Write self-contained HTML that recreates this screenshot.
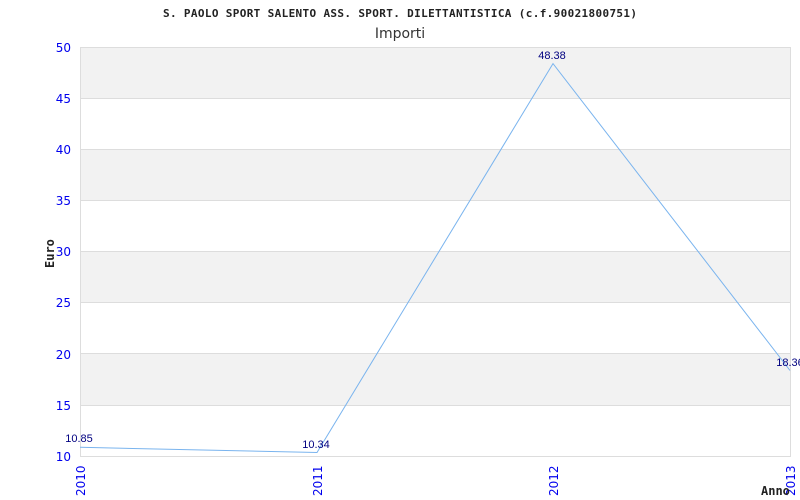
<!DOCTYPE html>
<html><head><style>body{margin:0;background:#fff}svg{display:block}</style></head><body>
<svg width="800" height="500" xmlns="http://www.w3.org/2000/svg" font-family="DejaVu Sans Mono, monospace">
<rect width="800" height="500" fill="#fff"/>
<text x="400" y="17" text-anchor="middle" font-size="11" font-weight="bold" fill="#222" textLength="474" lengthAdjust="spacing">S. PAOLO SPORT SALENTO ASS. SPORT. DILETTANTISTICA (c.f.90021800751)</text>
<text x="400" y="38" text-anchor="middle" font-size="14" fill="#333" font-family="DejaVu Sans, sans-serif">Importi</text>
<g fill="#f2f2f2">
<rect x="80" y="47" width="710" height="51"/>
<rect x="80" y="149" width="710" height="51"/>
<rect x="80" y="251" width="710" height="51"/>
<rect x="80" y="354" width="710" height="51"/>
</g>
<g stroke="#ddd" stroke-width="1">
<line x1="80" y1="98.5" x2="790" y2="98.5"/><line x1="80" y1="149.5" x2="790" y2="149.5"/>
<line x1="80" y1="200.5" x2="790" y2="200.5"/><line x1="80" y1="251.5" x2="790" y2="251.5"/>
<line x1="80" y1="302.5" x2="790" y2="302.5"/><line x1="80" y1="353.5" x2="790" y2="353.5"/>
<line x1="80" y1="405.5" x2="790" y2="405.5"/>
<rect x="80.5" y="47.5" width="710" height="409" fill="none"/>
</g>
<g font-size="12" fill="#0000ee" text-anchor="end" font-family="DejaVu Sans, sans-serif">
<text x="71" y="52">50</text><text x="71" y="103">45</text><text x="71" y="154">40</text><text x="71" y="205">35</text>
<text x="71" y="256">30</text><text x="71" y="307">25</text><text x="71" y="359">20</text><text x="71" y="410">15</text><text x="71" y="461">10</text>
</g>
<g font-size="12" fill="#0000ee" font-family="DejaVu Sans, sans-serif">
<text transform="translate(85,496) rotate(-90)">2010</text>
<text transform="translate(322,496) rotate(-90)">2011</text>
<text transform="translate(558,496) rotate(-90)">2012</text>
<text transform="translate(795,496) rotate(-90)">2013</text>
</g>
<text transform="translate(54,268) rotate(-90)" font-size="12" font-weight="bold" fill="#222">Euro</text>
<text x="761" y="495" font-size="12" font-weight="bold" fill="#222">Anno</text>
<polyline points="80,447.3 317,452.5 553,63.6 790,370.5" fill="none" stroke="#7ab4ee" stroke-width="1"/>
<g font-size="11" fill="#000080" font-family="Liberation Sans, sans-serif" text-anchor="middle">
<text x="79" y="442">10.85</text><text x="316" y="448">10.34</text><text x="552" y="59">48.38</text><text x="790" y="366">18.36</text>
</g>
</svg>
</body></html>
